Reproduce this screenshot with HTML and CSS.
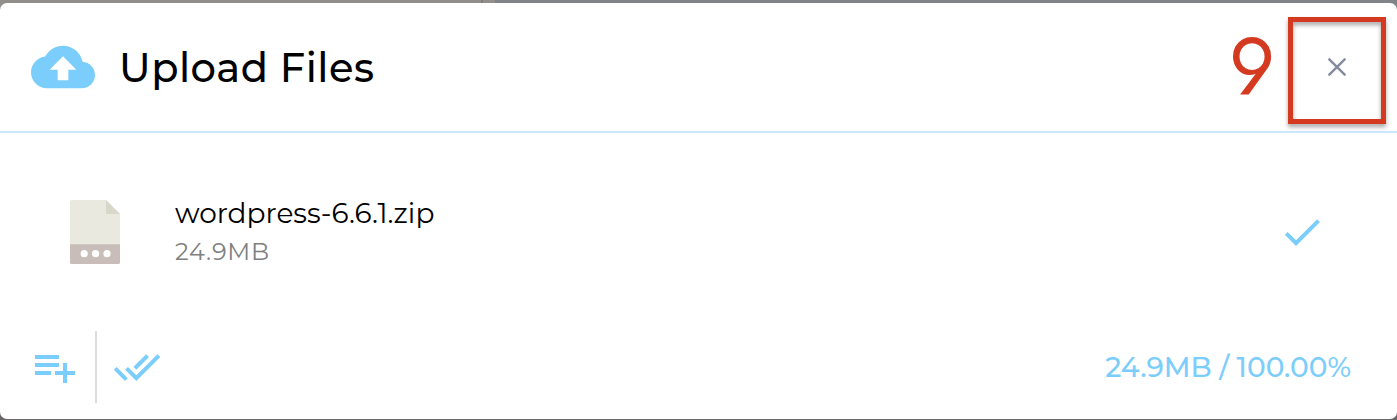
FILE: index.html
```html
<!DOCTYPE html>
<html lang="en">
<head>
    <meta charset="UTF-8">
    <meta name="viewport" content="width=device-width, initial-scale=1.0">
    <title>Upload Files</title>
    <link rel="stylesheet" href="styles.css">
</head>
<body>
    <div class="upload-modal">
        <!-- Header -->
        <div class="modal-header">
            <svg class="cloud-icon" viewBox="0 0 24 24">
                <path d="M19.35 10.04C18.67 6.59 15.64 4 12 4 9.11 4 6.6 5.64 5.35 8.04 2.34 8.36 0 10.91 0 14c0 3.31 2.69 6 6 6h13c2.76 0 5-2.24 5-5 0-2.64-2.05-4.78-4.65-4.96zM14 13v4h-4v-4H7l5-5 5 5h-3z"/>
            </svg>
            <h2 class="modal-title">Upload Files</h2>
            <button class="close-btn" aria-label="Close">
                <svg viewBox="0 0 20 20"><path d="M2.3 2.3l15.4 15.4M17.7 2.3L2.3 17.7"/></svg>
            </button>
            <div class="step-number">9</div>
            <div class="step-box"></div>
        </div>

        <!-- File list -->
        <div class="file-row">
            <svg class="file-icon" viewBox="0 0 50 64">
                <path fill="#e9e9e0" d="M1.5 0H36l14 14v31H0V1.5A1.5 1.5 0 0 1 1.5 0z"/>
                <path fill="#d9d7ca" d="M36 0v14h14z"/>
                <path fill="#c8bdb8" d="M0 44.3h50v18.2a1.5 1.5 0 0 1-1.5 1.5h-47A1.5 1.5 0 0 1 0 62.500z"/>
                <circle fill="#fff" cx="14.2" cy="53.7" r="3.6"/>
                <circle fill="#fff" cx="25.6" cy="53.7" r="3.6"/>
                <circle fill="#fff" cx="37" cy="53.7" r="3.6"/>
            </svg>
            <div class="file-info">
                <div class="file-name">wordpress-6.6.1.zip</div>
                <div class="file-size">24.9MB</div>
            </div>
            <svg class="icon" viewBox="0 0 24 24">
                <path d="M9 16.17L4.83 12l-1.42 1.41L9 19 21 7l-1.41-1.41z"/>
            </svg>
        </div>

        <!-- Footer -->
        <div class="modal-footer">
            <svg class="icon" viewBox="0 0 24 24">
                <path d="M14 10H2v2h12v-2zm0-4H2v2h12V6zm4 8v-4h-2v4h-4v2h4v4h2v-4h4v-2h-4zM2 16h8v-2H2v2z"/>
            </svg>
            <div class="divider"></div>
            <svg class="icon" viewBox="0 0 24 24">
                <path d="M18 7l-1.41-1.41-6.34 6.34 1.41 1.41L18 7zm4.24-1.41L11.66 16.17 7.48 12l-1.41 1.41L11.66 19l12-12-1.42-1.41zM.41 13.41L6 19l1.41-1.41L1.83 12 .41 13.41z"/>
            </svg>
            <div class="progress-text">24.9MB / 100.00%</div>
        </div>
    </div>
</body>
</html>
```
FILE: styles.css
```css
* {
    box-sizing: border-box;
}
body {
    margin: 0;
    height: 420px;
    padding: 3px 0 1px;
    overflow: hidden;
    font-family: Montserrat, Inter, sans-serif;
    background: linear-gradient(to right, #918e8c 481px, #7f7e7e 481px, #7f7e7e 483px, #918e8c 483px, #918e8c 495px, #808489 495px) top / 100% 210px no-repeat, #676566;
}
.upload-modal {
    height: 416px;
    background: #fff;
    border-radius: 7px;
    display: flex;
    flex-direction: column;
}

/* Header */
.modal-header {
    position: relative;
    height: 130px;
    padding: 0 50px 0 31px;
    display: flex;
    align-items: center;
    border-bottom: 2px solid #cce9fc;
}
.cloud-icon {
    width: 64px;
    height: 64px;
    fill: #7bcefb;
}
.modal-title {
    margin: 0 auto 0 24px;
    font-size: 40px;
    font-weight: 500;
    letter-spacing: 0.5px;
    color: #000;
}
.close-btn {
    width: 20px;
    height: 20px;
    padding: 0;
    border: none;
    background: none;
    cursor: pointer;
}
.close-btn svg {
    display: block;
    fill: none;
    stroke: #838b9e;
    stroke-width: 2.4;
    stroke-linecap: round;
}

/* Step marker over the close button */
.step-number {
    position: absolute;
    top: 16px;
    left: 1229px;
    font: 400 80px/96px Jost, Lato, sans-serif;
    color: #d33a20;
}
.step-box {
    position: absolute;
    top: 14px;
    left: 1288px;
    width: 98px;
    height: 107px;
    border: 5px solid #d33a20;
    filter: drop-shadow(0 3px 2px rgba(0, 0, 0, 0.35));
    pointer-events: none;
}

/* File list */
.file-row {
    height: 198px;
    padding: 0 71.5px 0 70px;
    display: flex;
    align-items: center;
}
.file-icon {
    width: 50px;
    height: 64px;
}
.file-info {
    margin: 0 auto 0 55px;
}
.file-name {
    font-size: 28px;
    line-height: 38px;
    color: #000;
}
.file-size {
    font-size: 24px;
    line-height: 39px;
    letter-spacing: 0.8px;
    color: #808080;
}
.icon {
    width: 48px;
    height: 48px;
    fill: #7bcefb;
}

/* Footer */
.modal-footer {
    height: 72px;
    padding: 0 46px 0 31px;
    display: flex;
    align-items: center;
}
.divider {
    width: 2px;
    height: 72px;
    margin: 0 16px;
    background: #ddd;
}
.progress-text {
    margin-left: auto;
    font-size: 28px;
    font-weight: 500;
    color: #7bcefb;
}
```
